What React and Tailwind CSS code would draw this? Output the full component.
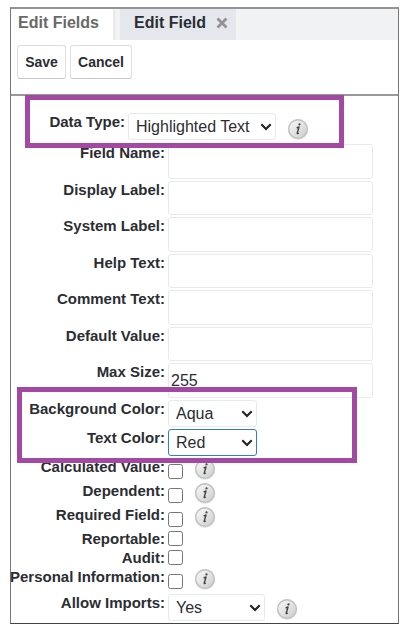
import { useState } from "react";

function InfoButton({ topic }) {
  return (
    <button type="button" aria-label={`Help: ${topic}`} className="block h-[22px] w-[22px] shrink-0">
      <svg viewBox="0 0 22 22" className="block h-full w-full">
        <defs>
          <linearGradient id="info-face" x1="0" y1="0" x2="1" y2="1">
            <stop offset="0" stopColor="#fbfbfb" />
            <stop offset="1" stopColor="#cbcbcb" />
          </linearGradient>
        </defs>
        <circle cx="11" cy="11.5" r="10.2" fill="#dedede" />
        <circle cx="11" cy="11" r="9.3" fill="url(#info-face)" stroke="#c2c2c2" strokeWidth="1.4" />
        <circle cx="12.5" cy="6.4" r="1.1" fill="#444" />
        <path
          d="M9.6 9.8 L12 9 L10.2 15.2 Q10.1 16.2 11.8 15"
          fill="none"
          stroke="#444"
          strokeWidth="1.4"
          strokeLinejoin="round"
        />
      </svg>
    </button>
  );
}

function Row({ id, label, labelWidth = "w-[154px]", className = "", children }) {
  return (
    <div className={`flex items-start gap-[3px] ${className}`}>
      <div className={`flex shrink-0 justify-end ${labelWidth}`}>
        <label htmlFor={id} className="text-[15px] leading-[18px] font-bold whitespace-nowrap">
          {label}:
        </label>
      </div>
      {children}
    </div>
  );
}

function SelectBox({ id, options, value, onChange, width, border = "border-[#e6e9ee]" }) {
  return (
    <div className={`relative h-[27px] shrink-0 ${width}`}>
      <select
        id={id}
        value={value}
        onChange={(e) => onChange(e.target.value)}
        className={`h-full w-full appearance-none rounded-[3px] border bg-white pl-[7px] text-base leading-5 outline-none ${border}`}
      >
        {options.map((option) => (
          <option key={option}>{option}</option>
        ))}
      </select>
      <svg viewBox="0 0 12 8" className="pointer-events-none absolute top-[10px] right-1 h-2 w-3">
        <path d="M1.3 1.3 L6 6 L10.7 1.3" fill="none" stroke="#222" strokeWidth="2.1" />
      </svg>
    </div>
  );
}

const textFields = [
  { id: "fieldName", label: "Field Name" },
  { id: "displayLabel", label: "Display Label" },
  { id: "systemLabel", label: "System Label" },
  { id: "helpText", label: "Help Text" },
  { id: "commentText", label: "Comment Text" },
  { id: "defaultValue", label: "Default Value" },
  { id: "maxSize", label: "Max Size", value: "255" },
];

const flags = [
  { id: "calculated", label: "Calculated Value", info: true },
  { id: "dependent", label: "Dependent", info: true },
  { id: "required", label: "Required Field", info: true },
  { id: "reportable", label: "Reportable" },
  { id: "audit", label: "Audit" },
  { id: "personal", label: "Personal Information", info: true },
];

export default function App() {
  const [dataType, setDataType] = useState("Highlighted Text");
  const [background, setBackground] = useState("Aqua");
  const [textColor, setTextColor] = useState("Red");
  const [allowImports, setAllowImports] = useState("Yes");

  return (
    <div className="bg-white px-[10px] py-[7px] font-['Liberation_Sans',Arial,sans-serif] text-[#2b2d33]">
      <div className="border border-t-2 border-[#777] border-t-[#949494] border-b-[#444]">
        {/* Tabs */}
        <nav className="flex h-[31px] bg-[#f1f2f4] text-base leading-7 font-bold">
          <a href="#fields" className="mr-[5px] w-[104px] border-r-2 border-[#e6eaef] bg-white pl-[7px] text-[#696969]">
            Edit Fields
          </a>
          <div className="flex w-[116px] items-start justify-between bg-[#e4e8ed] pr-2 pl-[14px]">
            <a href="#field">Edit Field</a>
            <button type="button" aria-label="Close tab" className="flex h-7 items-center">
              <svg viewBox="0 0 12 12" className="h-3 w-3">
                <path d="M1.5 1.5 L10.5 10.5 M10.5 1.5 L1.5 10.5" stroke="#929292" strokeWidth="2.8" />
              </svg>
            </button>
          </div>
        </nav>

        {/* Actions */}
        <div className="flex h-[56px] items-start gap-1 border-b-2 border-[#999] px-[6px] pt-[5px] text-sm font-bold">
          <button type="button" className="h-[34px] w-[49px] rounded-[3px] border border-[#dedede] border-b-[#c9c9c9] bg-white">
            Save
          </button>
          <button type="button" className="h-[34px] w-[62px] rounded-[3px] border border-[#dedede] border-b-[#c9c9c9] bg-white">
            Cancel
          </button>
        </div>

        <form className="flex flex-col gap-[2px]" onSubmit={(e) => e.preventDefault()}>
          <div className="relative h-[46px] pt-[17px]">
            <Row id="dataType" label="Data Type" labelWidth="w-[114px]">
              <SelectBox
                id="dataType"
                width="w-[148px]"
                value={dataType}
                onChange={setDataType}
                options={["Highlighted Text", "Text", "Number", "Date"]}
              />
              <div className="pt-[5px] pl-2">
                <InfoButton topic="Data Type" />
              </div>
            </Row>
            <div className="pointer-events-none absolute -top-px left-[14px] h-[53px] w-[319px] border-[5px] border-[#a349a4]" />
          </div>

          <div className="grid h-[254px] auto-rows-fr grid-cols-1 gap-y-[2px]">
            {textFields.map((field) => (
              <Row key={field.id} id={field.id} label={field.label}>
                <input
                  id={field.id}
                  type="text"
                  defaultValue={field.value}
                  className="mr-[25px] h-full min-w-0 flex-1 rounded-[3px] border border-[#e6e9ee] bg-white px-[2px] text-base leading-5 outline-none"
                />
              </Row>
            ))}
          </div>

          <div className="relative flex flex-col gap-[2px]">
            <Row id="background" label="Background Color">
              <SelectBox
                id="background"
                width="w-[89px]"
                value={background}
                onChange={setBackground}
                options={["Aqua", "Red", "Yellow"]}
              />
            </Row>
            <Row id="textColor" label="Text Color">
              <SelectBox
                id="textColor"
                width="w-[89px]"
                border="border-[#2f7fc1]"
                value={textColor}
                onChange={setTextColor}
                options={["Red", "Black", "White"]}
              />
            </Row>
            <div className="pointer-events-none absolute -top-[13px] left-[6px] z-10 h-[76px] w-[340px] border-[5px] border-[#a349a4]" />
          </div>

          <div>
            {flags.map((flag) => (
              <Row
                key={flag.id}
                id={flag.id}
                label={flag.label}
                className={flag.info ? "h-6" : "h-[19px]"}
              >
                <input
                  id={flag.id}
                  type="checkbox"
                  className={`h-[15px] w-[15px] shrink-0 ${flag.info ? "mt-[6px]" : "mt-px"}`}
                />
                {flag.info ? (
                  <div className="pl-2">
                    <InfoButton topic={flag.label} />
                  </div>
                ) : null}
              </Row>
            ))}
          </div>

          <Row id="allowImports" label="Allow Imports" className="pb-[2px]">
            <SelectBox
              id="allowImports"
              width="w-[97px]"
              value={allowImports}
              onChange={setAllowImports}
              options={["Yes", "No"]}
            />
            <div className="pt-1 pl-2">
              <InfoButton topic="Allow Imports" />
            </div>
          </Row>
        </form>
      </div>
    </div>
  );
}
